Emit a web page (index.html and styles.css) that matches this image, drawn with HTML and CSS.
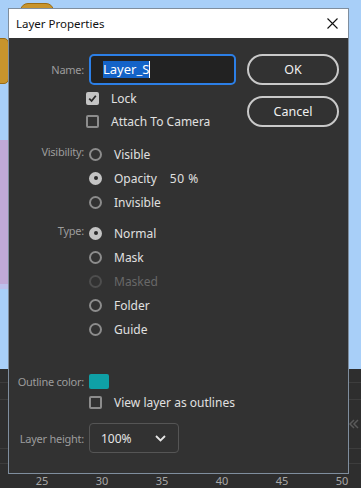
FILE: index.html
```html
<!DOCTYPE html>
<html lang="en">
<head>
  <meta charset="UTF-8">
  <meta name="viewport" content="width=device-width, initial-scale=1.0">
  <title>Layer Properties</title>
  <link rel="stylesheet" href="styles.css">
</head>
<body>
  <div class="stage">
    <div class="prop prop-top"></div>
    <div class="prop prop-side"></div>
    <div class="band"></div>
  </div>
  <div class="timeline">
    <div class="track t1"></div>
    <div class="track t2"></div>
    <div class="track t3">
      <svg class="collapse" width="12" height="10" viewBox="0 0 12 10"><path d="M6 1 2 5l4 4M10 1 6 5l4 4" fill="none" stroke="#5a5a5a" stroke-width="1.5"/></svg>
    </div>
    <div class="track t4"></div>
    <div class="ruler">
      <span>25</span><span>30</span><span>35</span><span>40</span><span>45</span><span>50</span>
    </div>
  </div>

  <div class="dialog">
    <div class="titlebar">
      <span class="title">Layer Properties</span>
      <svg class="close" width="11" height="11" viewBox="0 0 11 11"><path d="M0.5 0.5l10 10M10.5 0.5l-10 10" stroke="#111" stroke-width="1.1"/></svg>
    </div>

    <div class="dialog-body">
      <div class="form">
        <div class="row name-row">
          <label class="label">Name:</label>
          <div class="text-input"><span class="selected">Layer_S</span><span class="caret"></span></div>
        </div>

        <div class="row check-row">
          <span></span>
          <div class="option shift"><span class="checkbox checked"><svg width="9" height="9" viewBox="0 0 9 9"><path d="M1.2 4.6 3.6 7 7.8 1.8" fill="none" stroke="#2a2a2a" stroke-width="1.8"/></svg></span>Lock</div>
        </div>
        <div class="row check-row">
          <span></span>
          <div class="option shift"><span class="checkbox"></span>Attach To Camera</div>
        </div>

        <div class="group vis-group">
          <div class="row radio-row">
            <label class="label">Visibility:</label>
            <div class="option"><span class="radio"></span>Visible</div>
          </div>
          <div class="row radio-row">
            <span></span>
            <div class="option"><span class="radio on"></span>Opacity<span class="amount">50 %</span></div>
          </div>
          <div class="row radio-row">
            <span></span>
            <div class="option"><span class="radio"></span>Invisible</div>
          </div>
        </div>

        <div class="group type-group">
          <div class="row radio-row">
            <label class="label">Type:</label>
            <div class="option"><span class="radio on"></span>Normal</div>
          </div>
          <div class="row radio-row">
            <span></span>
            <div class="option"><span class="radio"></span>Mask</div>
          </div>
          <div class="row radio-row">
            <span></span>
            <div class="option disabled"><span class="radio"></span>Masked</div>
          </div>
          <div class="row radio-row">
            <span></span>
            <div class="option"><span class="radio"></span>Folder</div>
          </div>
          <div class="row radio-row">
            <span></span>
            <div class="option"><span class="radio"></span>Guide</div>
          </div>
        </div>

        <div class="row color-row">
          <label class="label">Outline color:</label>
          <span class="swatch"></span>
        </div>
        <div class="row outline-row">
          <span></span>
          <div class="option"><span class="checkbox"></span>View layer as outlines</div>
        </div>

        <div class="row height-row">
          <label class="label">Layer height:</label>
          <div class="select">
            <span>100%</span>
            <svg width="11" height="7" viewBox="0 0 11 7"><path d="M1 1l4.5 4.5L10 1" fill="none" stroke="#e6e6e6" stroke-width="1.8"/></svg>
          </div>
        </div>
      </div>

      <div class="actions">
        <button class="btn">OK</button>
        <button class="btn">Cancel</button>
      </div>
    </div>
  </div>
</body>
</html>
```

FILE: styles.css
```css
body {
  margin: 0;
  width: 361px;
  height: 488px;
  overflow: hidden;
  background-color: #a8cff8;
  font-family: "Noto Sans", "DejaVu Sans", sans-serif;
}

/* scene behind the dialog */
.stage {
  position: relative;
  height: 369px;
  background-color: #a8cff8;
}

.prop {
  position: absolute;
  background-color: #c8942c;
  border: 1px solid #9a6c14;
}

.prop-top {
  left: 20px;
  top: 3px;
  width: 32px;
  height: 10px;
  border-radius: 8px 8px 0 0;
}

.prop-side {
  left: -6px;
  top: 38px;
  width: 13px;
  height: 44px;
  border-radius: 5px;
}

.band {
  position: absolute;
  left: 0;
  top: 140px;
  width: 10px;
  height: 144px;
  background-color: #c0a9d7;
  border-bottom: 5px solid #bcc0ec;
}

.timeline {
  height: 119px;
  background-color: #2e2e2e;
}

.track {
  border-bottom: 1px solid #3d3d3d;
  box-sizing: border-box;
}

.t1 { height: 14px; }
.t2 { height: 17px; }
.t3 {
  height: 49px;
  display: flex;
  justify-content: flex-end;
  align-items: center;
  padding-right: 1px;
}
.t4 { height: 15px; }

.ruler {
  display: flex;
  padding-left: 12px;
  height: 24px;
  align-items: center;
}

.ruler span {
  flex: 0 0 60px;
  text-align: center;
  color: #a8a8a8;
  font-size: 11px;
  padding-top: 8px;
}

/* dialog */
.dialog {
  position: absolute;
  left: 8px;
  top: 8px;
  width: 341px;
  height: 466px;
  box-sizing: border-box;
  border: 1px solid #7f8e9e;
  background-color: #323232;
  display: flex;
  flex-direction: column;
}

.titlebar {
  height: 29px;
  background-color: #fff;
  display: flex;
  align-items: center;
  justify-content: space-between;
  padding: 0 10px 0 7px;
}

.title {
  font-size: 11.5px;
  color: #111;
}

.dialog-body {
  flex: 1;
  display: flex;
  padding-top: 16px;
}

.form {
  flex: 1;
}

.row {
  display: grid;
  grid-template-columns: 75px 1fr;
  column-gap: 5px;
  align-items: center;
}

.label {
  text-align: right;
  font-size: 11px;
  letter-spacing: -0.25px;
  color: #9c9c9c;
}

.name-row { height: 31px; margin-bottom: 2px; }
.check-row { height: 23px; }
.radio-row { height: 24px; }
.radio-row .label { margin-top: -5px; }

.vis-group { margin-top: 9px; }
.type-group { margin-top: 7px; }

.color-row { height: 19px; margin-top: 31px; }
.outline-row { height: 22px; }
.height-row { height: 30px; margin-top: 10px; }

.text-input {
  width: 147px;
  height: 31px;
  box-sizing: border-box;
  border: 2px solid #2c7fe6;
  border-radius: 5px;
  background-color: #222;
  padding-left: 12px;
  display: flex;
  align-items: center;
  font-size: 13px;
  color: #fff;
}

.selected {
  background-color: #1463c8;
  line-height: 17px;
}

.caret {
  width: 1px;
  height: 17px;
  background-color: #fff;
}

.option {
  display: flex;
  align-items: center;
  font-size: 12px;
  color: #e0e0e0;
}

.option.shift { margin-left: -3px; }
.option.disabled { color: #686868; }

.checkbox,
.radio {
  width: 13px;
  height: 13px;
  box-sizing: border-box;
  border: 2px solid #8c8c8c;
  margin-right: 12px;
  display: flex;
  align-items: center;
  justify-content: center;
  flex-shrink: 0;
}

.checkbox { border-radius: 2px; }

.checkbox.checked {
  background-color: #c4c4c4;
  border-color: #c4c4c4;
}

.radio { border-radius: 50%; }

.radio.on {
  background-color: #c4c4c4;
  border-color: #c4c4c4;
}

.radio.on::after {
  content: "";
  width: 4px;
  height: 4px;
  border-radius: 50%;
  background-color: #2a2a2a;
}

.disabled .radio { border-color: #4e4e4e; }

.amount { margin-left: 13px; letter-spacing: 0.5px; }

.swatch {
  width: 20px;
  height: 15px;
  border-radius: 2px;
  background-color: #0fa0a6;
}

.select {
  width: 90px;
  height: 30px;
  box-sizing: border-box;
  border: 1px solid #555;
  border-radius: 4px;
  display: flex;
  align-items: center;
  justify-content: space-between;
  padding: 0 12px 0 11px;
  font-size: 12px;
  color: #e6e6e6;
}

.actions {
  width: 92px;
  padding-right: 9px;
  display: flex;
  flex-direction: column;
  gap: 11px;
}

.btn {
  height: 31px;
  border: 2px solid #c9c9c9;
  border-radius: 16px;
  background-color: transparent;
  color: #f0f0f0;
  font-family: "Noto Sans", sans-serif;
  font-size: 12.5px;
  padding: 0;
}
```
